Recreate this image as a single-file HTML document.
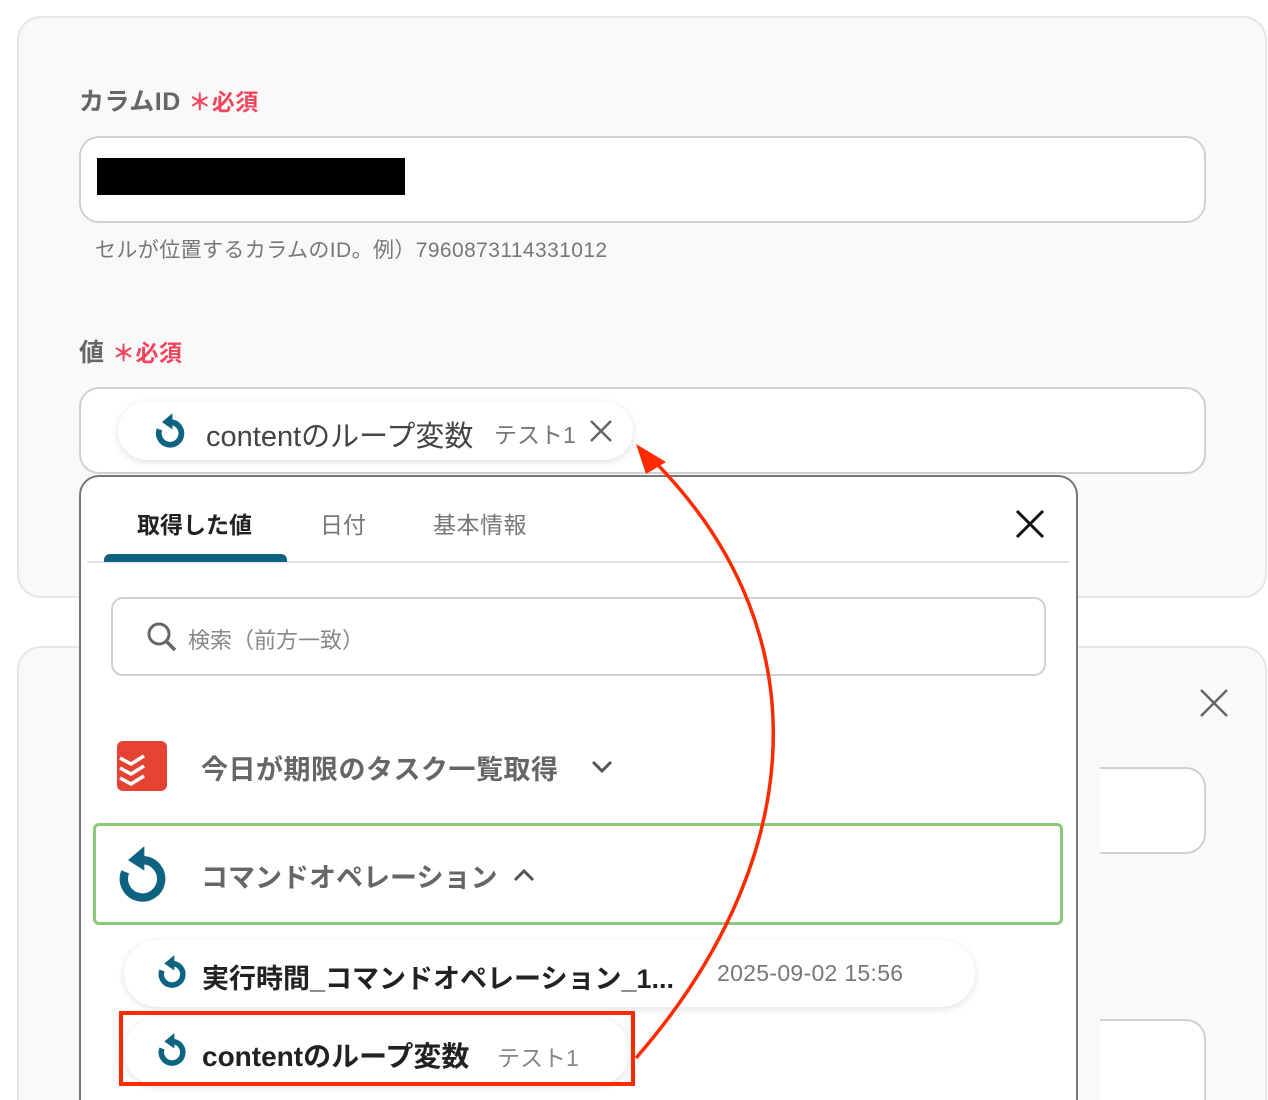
<!DOCTYPE html>
<html><head><meta charset="utf-8"><style>
*{box-sizing:border-box;margin:0;padding:0}
html,body{width:1268px;height:1100px;overflow:hidden}
body{background:#fff;font-family:"Liberation Sans","Noto Sans CJK JP",sans-serif;position:relative;color:#333}
.abs{position:absolute}
.card{position:absolute;left:17px;width:1250px;background:#f9f9f9;border:2px solid #e6e6e6;border-radius:24px}
.lbl{position:absolute;font-size:25px;color:#666;font-weight:bold;letter-spacing:0.5px}
.req{color:#f0455d;font-size:23px}
.inp{position:absolute;background:#fff;border:2px solid #d0d0d0;border-radius:20px}
.pill{position:absolute;background:#fff;border-radius:34px;box-shadow:0 2px 8px rgba(0,0,0,.12)}
.t{position:absolute;white-space:nowrap}
</style></head><body>
<div class="card" style="top:16px;height:582px"></div>
<div class="card" style="top:646px;height:454px;border-bottom:none;border-radius:24px 24px 0 0"></div>
<div class="lbl" style="left:79px;top:82px">カラムID <span class="req">＊必須</span></div>
<div class="inp" style="left:79px;top:136px;width:1127px;height:87px"></div>
<div class="abs" style="left:97px;top:158px;width:308px;height:37px;background:#000"></div>
<div class="t" style="left:95px;top:234px;font-size:21px;color:#777;letter-spacing:0.4px">セルが位置するカラムのID。例）7960873114331012</div>
<div class="lbl" style="left:79px;top:333px">値 <span class="req">＊必須</span></div>
<div class="inp" style="left:79px;top:387px;width:1127px;height:87px"></div>
<div class="pill" style="left:118px;top:402px;width:515px;height:58px"></div>
<svg class="abs" style="left:150px;top:410px" width="40" height="42" viewBox="0 0 24 26"><path d="M12.5 7.5 A7 7 0 1 1 5.5 12" fill="none" stroke="#0e6480" stroke-width="3.6"/><path d="M13.5 2 L7 7.5 L13.5 12 Z" fill="#0e6480"/></svg>
<div class="t" style="left:206px;top:413px;font-size:29px;color:#444">contentのループ変数</div>
<div class="t" style="left:494px;top:416px;font-size:23px;color:#777">テスト1</div>
<svg class="abs" style="left:588px;top:418px" width="26" height="26" viewBox="0 0 26 26"><path d="M3 3L23 23M23 3L3 23" stroke="#666" stroke-width="2.5"/></svg>
<svg class="abs" style="left:1198px;top:687px" width="32" height="32" viewBox="0 0 32 32"><path d="M3 3L29 29M29 3L3 29" stroke="#666" stroke-width="2.5"/></svg>
<div class="inp" style="left:1100px;top:767px;width:106px;height:87px;border-left:none;border-radius:0 20px 20px 0"></div>
<div class="inp" style="left:1100px;top:1019px;width:106px;height:81px;border-left:none;border-bottom:none;border-radius:0 20px 0 0"></div>
<div class="abs" style="left:79px;top:475px;width:999px;height:625px;background:#fff;border:2px solid #777;border-bottom:none;border-radius:20px 20px 0 0"></div>
<div class="t" style="left:137px;top:506px;font-size:23px;font-weight:bold;color:#222">取得した値</div>
<div class="t" style="left:320px;top:506px;font-size:23px;color:#777">日付</div>
<div class="t" style="left:433px;top:506px;font-size:23px;color:#777;letter-spacing:0.5px">基本情報</div>
<div class="abs" style="left:87px;top:561px;width:982px;height:2px;background:#e4e4e4"></div>
<div class="abs" style="left:104px;top:554px;width:183px;height:8px;background:#0e6480;border-radius:6px 6px 0 0"></div>
<svg class="abs" style="left:1014px;top:508px" width="32" height="32" viewBox="0 0 32 32"><path d="M3 3L29 29M29 3L3 29" stroke="#111" stroke-width="3"/></svg>
<div class="abs" style="left:111px;top:597px;width:935px;height:79px;border:2px solid #d0d0d0;border-radius:12px"></div>
<svg class="abs" style="left:146px;top:621px" width="32" height="32" viewBox="0 0 32 32"><circle cx="13" cy="13" r="10" fill="none" stroke="#666" stroke-width="3"/><path d="M20 20L29 29" stroke="#666" stroke-width="3.5"/></svg>
<div class="t" style="left:188px;top:623px;font-size:22px;color:#888">検索（前方一致）</div>
<svg class="abs" style="left:117px;top:741px" width="50" height="50" viewBox="0 0 50 50"><rect width="50" height="50" rx="6" fill="#e44332"/><path d="M3 17l11 6 13-8M3 27l11 6 13-8M3 37l11 6 13-8" fill="none" stroke="#fff" stroke-width="3.5"/></svg>
<div class="t" style="left:201px;top:748px;font-size:27px;font-weight:bold;color:#666;letter-spacing:0.5px">今日が期限のタスク一覧取得</div>
<svg class="abs" style="left:590px;top:758px" width="24" height="18" viewBox="0 0 24 18"><path d="M3 4L12 13L21 4" fill="none" stroke="#555" stroke-width="3"/></svg>
<div class="abs" style="left:93px;top:823px;width:970px;height:102px;border:3px solid #8cc87a;border-radius:6px"></div>
<svg class="abs" style="left:114px;top:842px" width="56" height="62" viewBox="0 0 24 26"><path d="M12.5 7.5 A8 8 0 1 1 4.8 12.5" fill="none" stroke="#0e6480" stroke-width="3.6"/><path d="M13 1.5 L6 7.5 L13 12 Z" fill="#0e6480"/></svg>
<div class="t" style="left:201px;top:856px;font-size:27px;font-weight:bold;color:#666">コマンドオペレーション</div>
<svg class="abs" style="left:512px;top:866px" width="24" height="18" viewBox="0 0 24 18"><path d="M3 14L12 5L21 14" fill="none" stroke="#555" stroke-width="3"/></svg>
<div class="pill" style="left:124px;top:940px;width:851px;height:67px"></div>
<svg class="abs" style="left:153px;top:952px" width="38" height="40" viewBox="0 0 24 26"><path d="M12.5 7.5 A7 7 0 1 1 5.5 12" fill="none" stroke="#0e6480" stroke-width="3.6"/><path d="M13.5 2 L7 7.5 L13.5 12 Z" fill="#0e6480"/></svg>
<div class="t" style="left:202px;top:957px;font-size:27px;font-weight:bold;color:#222">実行時間_コマンドオペレーション_1...</div>
<div class="t" style="left:717px;top:960px;font-size:23px;color:#777;letter-spacing:0.3px">2025-09-02 15:56</div>
<div class="pill" style="left:124px;top:1018px;width:506px;height:67px"></div>
<svg class="abs" style="left:153px;top:1030px" width="38" height="40" viewBox="0 0 24 26"><path d="M12.5 7.5 A7 7 0 1 1 5.5 12" fill="none" stroke="#0e6480" stroke-width="3.6"/><path d="M13.5 2 L7 7.5 L13.5 12 Z" fill="#0e6480"/></svg>
<div class="t" style="left:202px;top:1035px;font-size:28px;font-weight:bold;color:#222">contentのループ変数</div>
<div class="t" style="left:497px;top:1039px;font-size:23px;color:#888">テスト1</div>
<div class="abs" style="left:119px;top:1011px;width:516px;height:75px;border:4px solid #ff2a00"></div>
<svg class="abs" style="left:0;top:0" width="1268" height="1100"><path d="M636 1058 C 800 870, 830 640, 655 462" fill="none" stroke="#ff2a00" stroke-width="3.5"/><path d="M636 444 L666 462 L646 474 Z" fill="#ff2a00"/></svg>
</body></html>
